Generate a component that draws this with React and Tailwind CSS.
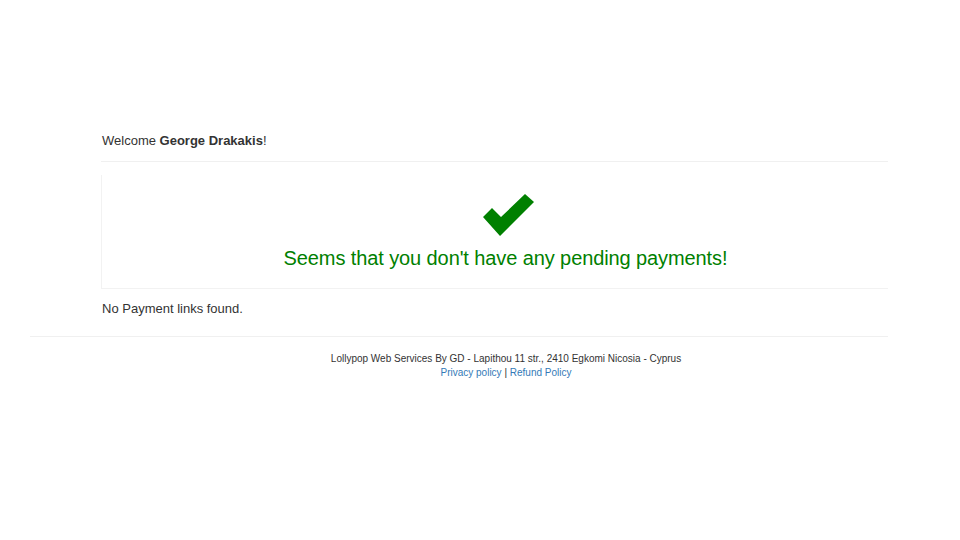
// Payments overview page: welcome line, empty-state card and footer
export default function App() {
  return (
    <div className="min-h-[540px] bg-white pt-[131px] text-[#333] font-['Liberation_Sans',Arial,sans-serif]">
      <div className="ml-[102px] w-[786px]">
        <p className="text-[13px] leading-[19px]">
          Welcome <b>George Drakakis</b>!
        </p>
        <hr className="mt-[11px] border-0 border-t border-[#f0f0f0] -ml-px" />
      </div>

      {/* Tarjeta de estado vacío */}
      <div className="ml-[101px] mt-[13px] w-[787px] h-[114px] border-l border-b border-[#f2f2f2] flex flex-col items-center pl-[21px] pt-[19px]">
        <svg width="52" height="42" viewBox="482 193 52 42" className="ml-[6px]">
          <polygon points="482,216 491,207 500,216 524,193 533,201 499,235" fill="#008000" />
        </svg>
        <p className="mt-[8px] text-[20px] leading-[28px] tracking-[-0.1px] text-[#008000]">
          Seems that you don't have any pending payments!
        </p>
      </div>

      <p className="ml-[102px] mt-[10px] text-[13px] leading-[19px]">No Payment links found.</p>

      <hr className="ml-[30px] mt-[18px] w-[858px] border-0 border-t border-[#f0f0f0]" />

      <footer className="ml-[130px] w-[752px] mt-[15px] text-center text-[10px] leading-[14px]">
        <p>Lollypop Web Services By GD - Lapithou 11 str., 2410 Egkomi Nicosia - Cyprus</p>
        <p>
          <a href="#" className="text-[#337ab7]">Privacy policy</a> |{' '}
          <a href="#" className="text-[#337ab7]">Refund Policy</a>
        </p>
      </footer>
    </div>
  );
}
